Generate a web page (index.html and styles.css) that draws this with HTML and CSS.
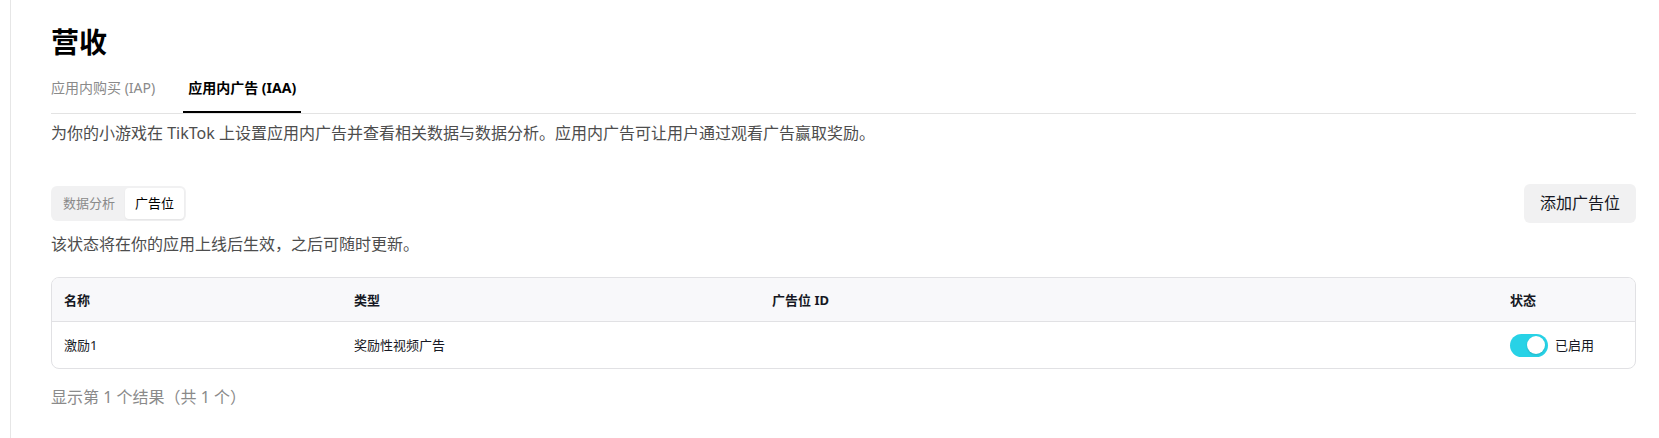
FILE: index.html
```html
<!DOCTYPE html>
<html lang="zh-CN">
<head>
<meta charset="utf-8">
<title>营收</title>
<link rel="stylesheet" href="styles.css">
</head>
<body>
<div class="layout">
  <div class="rail"></div>
  <main class="main">
    <h1 class="title">营收</h1>
    <nav class="tabs">
      <div class="tab">应用内购买 (IAP)</div>
      <div class="tab tab-active">应用内广告 (IAA)</div>
    </nav>
    <p class="desc">为你的小游戏在 TikTok 上设置应用内广告并查看相关数据与数据分析。应用内广告可让用户通过观看广告赢取奖励。</p>
    <div class="toolbar">
      <div class="segmented">
        <div class="seg">数据分析</div>
        <div class="seg seg-active">广告位</div>
      </div>
      <button class="btn">添加广告位</button>
    </div>
    <p class="note">该状态将在你的应用上线后生效，之后可随时更新。</p>
    <div class="table">
      <div class="row head">
        <div class="cell">名称</div>
        <div class="cell">类型</div>
        <div class="cell">广告位 ID</div>
        <div class="cell">状态</div>
      </div>
      <div class="row body">
        <div class="cell">激励1</div>
        <div class="cell">奖励性视频广告</div>
        <div class="cell"></div>
        <div class="cell status">
          <span class="toggle"><span class="knob"></span></span>
          <span>已启用</span>
        </div>
      </div>
    </div>
    <p class="footer">显示第 1 个结果（共 1 个）</p>
  </main>
</div>
</body>
</html>
```

FILE: styles.css
```css
* { box-sizing: border-box; }
html, body { margin: 0; padding: 0; background: #fff; }
body {
  font-family: "Noto Sans", "Noto Sans CJK SC", sans-serif;
  color: #161823;
}
.layout { display: flex; min-height: 100vh; }
.rail {
  width: 11px;
  flex: none;
  border-right: 1px solid #e6e6e6;
}
.main {
  flex: 1;
  padding: 24px 23px 0 40px;
}
.title {
  margin: 0;
  font-size: 28px;
  line-height: 36px;
  font-weight: 700;
  color: #000;
}
.tabs {
  display: flex;
  gap: 23px;
  border-bottom: 1px solid #e3e3e3;
}
.tab {
  padding: 18px 5px 13px;
  font-size: 14px;
  line-height: 20px;
  color: #8a8a8a;
  border-bottom: 2px solid transparent;
}
.tab:first-child { padding-left: 0; }
.tab-active {
  color: #000;
  font-weight: 700;
  border-bottom-color: #000;
}
.desc {
  margin: 7px 0 0;
  font-size: 16px;
  line-height: 24px;
  color: #4d4d4d;
}
.toolbar {
  margin-top: 39px;
  display: flex;
  align-items: center;
  justify-content: space-between;
}
.segmented {
  display: flex;
  padding: 2px;
  background: #f1f1f2;
  border-radius: 6px;
}
.seg {
  padding: 0 10px;
  font-size: 13px;
  line-height: 31px;
  color: #8a8a8a;
  border-radius: 4px;
}
.seg-active {
  background: #fff;
  color: #000;
  box-shadow: 0 1px 2px rgba(0,0,0,0.06);
}
.btn {
  font-family: inherit;
  font-size: 16px;
  line-height: 23px;
  padding: 8px 16px;
  border: none;
  border-radius: 6px;
  background: #f1f1f2;
  color: #161823;
}
.note {
  margin: 9px 0 0;
  font-size: 16px;
  line-height: 24px;
  color: #4d4d4d;
}
.table {
  margin-top: 21px;
  border: 1px solid #e1e1e4;
  border-radius: 8px;
  overflow: hidden;
}
.row {
  display: grid;
  grid-template-columns: 290px 418px 1fr 137px;
  align-items: center;
  font-size: 13px;
}
.head {
  height: 44px;
  background: #f8f8fa;
  border-bottom: 1px solid #e1e1e4;
  font-weight: 700;
  color: #161823;
}
.body {
  height: 46px;
  color: #161823;
}
.cell { padding: 0 12px; line-height: 20px; }
.status {
  display: flex;
  align-items: center;
  gap: 7px;
}
.toggle {
  width: 38px;
  height: 23px;
  border-radius: 12px;
  background: #28d2e6;
  display: flex;
  align-items: center;
  justify-content: flex-end;
  padding: 0 3px;
}
.knob {
  width: 18px;
  height: 18px;
  border-radius: 50%;
  background: #fff;
  box-shadow: 0 1px 2px rgba(0,0,0,0.15);
}
.footer {
  margin: 16px 0 0;
  font-size: 16px;
  line-height: 24px;
  color: #8a8a8a;
}
```
